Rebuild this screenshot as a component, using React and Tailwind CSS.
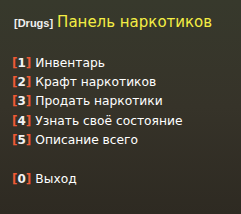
import React from "react";

const items = [
  { key: "1", label: "Инвентарь" },
  { key: "2", label: "Крафт наркотиков" },
  { key: "3", label: "Продать наркотики" },
  { key: "4", label: "Узнать своё состояние" },
  { key: "5", label: "Описание всего" },
];

const MenuRow = ({ n, label, className = "" }) => (
  <div className={"h-[19.4px] leading-[19.4px] whitespace-nowrap " + className}>
    <span className="text-[12px] font-bold text-[#ee5a36]">[</span>
    <span className="text-[12px] font-bold text-[#f2f2f2]">{n}</span>
    <span className="text-[12px] font-bold text-[#ee5a36] mr-[4px]">]</span>
    <span className="text-[12.25px] text-white">{label}</span>
  </div>
);

export default function App() {
  return (
    <div
      className="w-[241px] h-[214px] overflow-hidden bg-gradient-to-b from-[#37392c] via-[#363329] to-[#2e2a22] px-[12px] pt-[12px]"
      style={{ fontFamily: '"DejaVu Sans", Verdana, sans-serif' }}
    >
      <div className="h-[20px] leading-[20px] pl-[2px] whitespace-nowrap">
        <span className="text-[11px] font-bold text-[#f0f0f0] mr-[4px] font-['Liberation_Sans']">
          [Drugs]
        </span>
        <span className="text-[15px] text-[#f4ee44]">Панель наркотиков</span>
      </div>

      <div className="mt-[19.5px]">
        {items.map((it) => (
          <MenuRow key={it.key} n={it.key} label={it.label} />
        ))}
        <MenuRow n="0" label="Выход" className="mt-[19.4px]" />
      </div>
    </div>
  );
}
